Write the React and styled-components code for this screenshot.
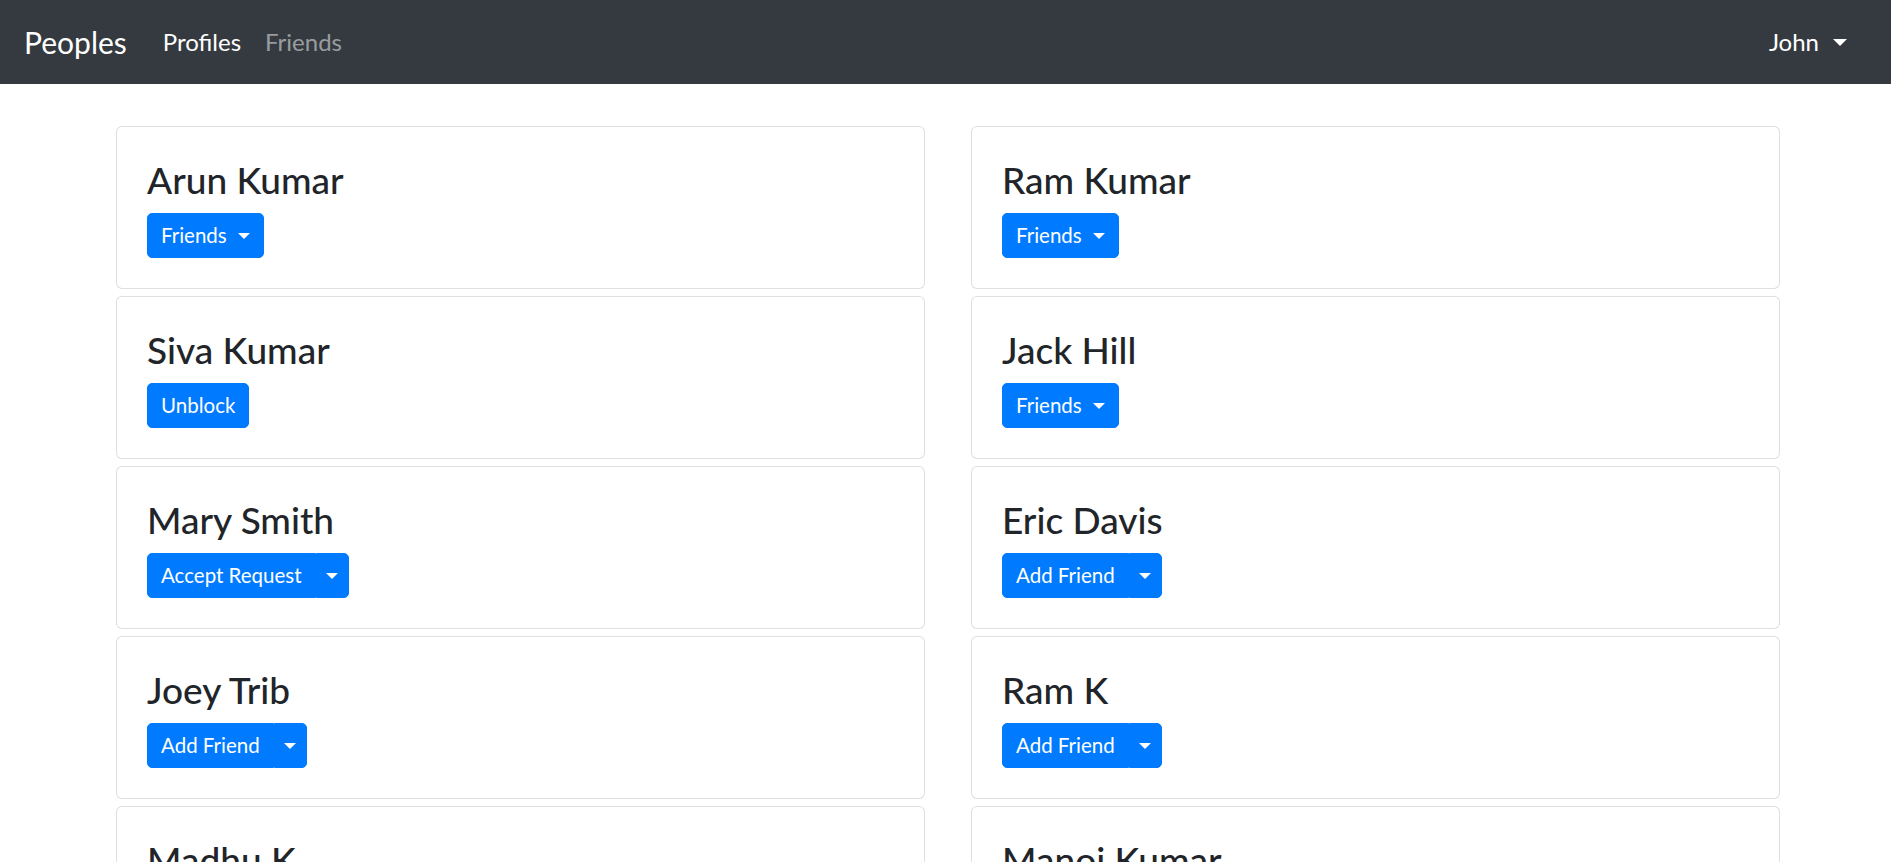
import React from 'react';
import styled, { createGlobalStyle } from 'styled-components';

const FONT = `Lato, "Open Sans", "Noto Sans", sans-serif`;

const GlobalStyle = createGlobalStyle`
  html, body { margin: 0; padding: 0; background: #fff; overflow: hidden; }
  body { font-family: ${FONT}; color: #212529; }
  *, *::before, *::after { box-sizing: border-box; }
`;

const Navbar = styled.nav`
  height: 84px;
  background: #343a40;
  display: flex;
  align-items: center;
  padding: 0 44px 0 24px;
`;

const Brand = styled.a`
  font-size: 30px;
  line-height: 45px;
  color: #fff;
  margin-right: 24px;
  text-decoration: none;
`;

const NavList = styled.ul`
  display: flex;
  list-style: none;
  margin: 0;
  padding: 0;
  flex: 1;
`;

const NavLink = styled.a`
  display: block;
  font-size: 24px;
  line-height: 36px;
  padding: 0 12px;
  color: ${(p) => (p.$active ? '#fff' : 'rgba(255,255,255,.5)')};
  text-decoration: none;
`;

const UserToggle = styled.a`
  display: flex;
  align-items: center;
  gap: 14px;
  font-size: 24px;
  line-height: 36px;
  color: #fff;
  text-decoration: none;
`;

const Caret = styled.span`
  display: inline-block;
  width: 0;
  height: 0;
  border-top: 0.3em solid currentColor;
  border-left: 0.3em solid transparent;
  border-right: 0.3em solid transparent;
  margin-left: ${(p) => p.$gap || 0}px;
`;

const Main = styled.main`
  padding: 42px 111px 0 116px;
  display: grid;
  grid-template-columns: 1fr 1fr;
  column-gap: 46px;
  row-gap: 7px;
`;

const Card = styled.div`
  border: 1px solid rgba(0, 0, 0, 0.125);
  border-radius: 6px;
  padding: 30px;
  background: #fff;
`;

const Name = styled.h4`
  margin: 0 0 10px;
  font-size: 37px;
  line-height: 46px;
  font-weight: 500;
  color: #212529;
`;

const Btn = styled.button`
  display: inline-flex;
  align-items: center;
  background: #007bff;
  color: #fff;
  border: 1px solid #007bff;
  font-family: inherit;
  font-size: 20.5px;
  line-height: 31px;
  padding: 6px ${(p) => (p.$split ? '10px 6px 9px' : '13px')};
  border-radius: ${(p) =>
    p.$part === 'left' ? '5px 0 0 5px' : p.$part === 'right' ? '0 5px 5px 0' : '5px'};
  cursor: pointer;
`;

const BtnGroup = styled.div`
  display: inline-flex;
`;

function Action({ kind, label }) {
  if (kind === 'dropdown') {
    return (
      <Btn>
        {label}
        <Caret $gap={11} />
      </Btn>
    );
  }
  if (kind === 'split') {
    return (
      <BtnGroup>
        <Btn $part="left">{label}</Btn>
        <Btn $part="right" $split>
          <Caret />
        </Btn>
      </BtnGroup>
    );
  }
  return <Btn>{label}</Btn>;
}

const people = [
  { name: 'Arun Kumar', kind: 'dropdown', label: 'Friends' },
  { name: 'Ram Kumar', kind: 'dropdown', label: 'Friends' },
  { name: 'Siva Kumar', kind: 'plain', label: 'Unblock' },
  { name: 'Jack Hill', kind: 'dropdown', label: 'Friends' },
  { name: 'Mary Smith', kind: 'split', label: 'Accept Request' },
  { name: 'Eric Davis', kind: 'split', label: 'Add Friend' },
  { name: 'Joey Trib', kind: 'split', label: 'Add Friend' },
  { name: 'Ram K', kind: 'split', label: 'Add Friend' },
  { name: 'Madhu K', kind: 'split', label: 'Add Friend' },
  { name: 'Manoj Kumar', kind: 'split', label: 'Add Friend' },
];

export default function App() {
  return (
    <>
      <GlobalStyle />
      <Navbar>
        <Brand href="#">Peoples</Brand>
        <NavList>
          <li><NavLink href="#" $active>Profiles</NavLink></li>
          <li><NavLink href="#">Friends</NavLink></li>
        </NavList>
        <UserToggle href="#">
          John
          <Caret />
        </UserToggle>
      </Navbar>
      <Main>
        {people.map((p) => (
          <Card key={p.name}>
            <Name>{p.name}</Name>
            <Action kind={p.kind} label={p.label} />
          </Card>
        ))}
      </Main>
    </>
  );
}
